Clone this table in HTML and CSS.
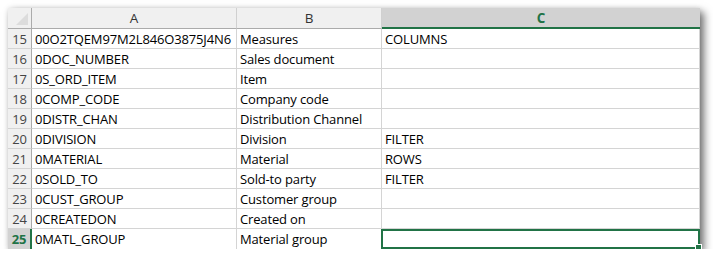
FILE: index.html
```html
<!DOCTYPE html>
<html>
<head>
<meta charset="utf-8">
<link rel="stylesheet" href="styles.css">
</head>
<body>
<div class="sheet">
  <div class="corner"><span class="tri"></span></div>
  <div class="colhead">A</div>
  <div class="colhead">B</div>
  <div class="colhead sel">C</div>

  <div class="rowhead">15</div><div class="cell">00O2TQEM97M2L846O3875J4N6</div><div class="cell">Measures</div><div class="cell">COLUMNS</div>
  <div class="rowhead">16</div><div class="cell">0DOC_NUMBER</div><div class="cell">Sales document</div><div class="cell"></div>
  <div class="rowhead">17</div><div class="cell">0S_ORD_ITEM</div><div class="cell">Item</div><div class="cell"></div>
  <div class="rowhead">18</div><div class="cell">0COMP_CODE</div><div class="cell">Company code</div><div class="cell"></div>
  <div class="rowhead">19</div><div class="cell">0DISTR_CHAN</div><div class="cell">Distribution Channel</div><div class="cell"></div>
  <div class="rowhead">20</div><div class="cell">0DIVISION</div><div class="cell">Division</div><div class="cell">FILTER</div>
  <div class="rowhead">21</div><div class="cell">0MATERIAL</div><div class="cell">Material</div><div class="cell">ROWS</div>
  <div class="rowhead">22</div><div class="cell">0SOLD_TO</div><div class="cell">Sold-to party</div><div class="cell">FILTER</div>
  <div class="rowhead">23</div><div class="cell">0CUST_GROUP</div><div class="cell">Customer group</div><div class="cell"></div>
  <div class="rowhead">24</div><div class="cell">0CREATEDON</div><div class="cell">Created on</div><div class="cell"></div>
  <div class="rowhead sel">25</div><div class="cell last">0MATL_GROUP</div><div class="cell last">Material group</div><div class="cell last active"><span class="handle"></span></div>
</div>
</body>
</html>
```

FILE: styles.css
```css
html, body {
  margin: 0;
  padding: 0;
  background: #ffffff;
}
body {
  padding: 8px 0 0 8px;
}
.sheet {
  display: grid;
  grid-template-columns: 24px 205px 145px 318px;
  grid-template-rows: 21px repeat(11, 20px);
  width: 692px;
  background: #fff;
  box-shadow: 4px 4px 8px rgba(0, 0, 0, 0.55), 0 0 5px rgba(0,0,0,0.1);
  font-family: "Open Sans", "Liberation Sans", sans-serif;
  font-size: 13px;
  letter-spacing: -0.15px;
  color: #000;
}
.corner {
  background: #f0f0f0;
  border-right: 1px solid #ababab;
  border-bottom: 1px solid #ababab;
  position: relative;
}
.tri {
  position: absolute;
  right: 3px;
  bottom: 3px;
  width: 0;
  height: 0;
  border-left: 12px solid transparent;
  border-bottom: 12px solid #dcdcdc;
}
.colhead {
  background: #f0f0f0;
  border-right: 1px solid #d0d0d0;
  border-bottom: 1px solid #ababab;
  display: flex;
  align-items: center;
  justify-content: center;
  color: #333;
  font-size: 13.5px;
}
.colhead.sel {
  background: #d2d2d2;
  border-bottom: 2px solid #217346;
  border-right: none;
  color: #217346;
  font-weight: bold;
}
.rowhead {
  background: #f0f0f0;
  border-right: 1px solid #ababab;
  border-bottom: 1px solid #d4d4d4;
  display: flex;
  align-items: center;
  justify-content: center;
  color: #444;
  font-size: 13px;
}
.rowhead.sel {
  background: #d2d2d2;
  color: #217346;
  font-weight: bold;
  border-right: 2px solid #217346;
  border-bottom: none;
}
.cell {
  border-right: 1px solid #d4d4d4;
  border-bottom: 1px solid #d4d4d4;
  display: flex;
  align-items: center;
  padding-left: 3px;
  white-space: nowrap;
  overflow: hidden;
}
.cell.last {
  border-bottom: none;
}
.cell.active {
  border: 2px solid #217346;
  margin-left: -1px;
  position: relative;
  overflow: visible;
}
.handle {
  position: absolute;
  right: -4px;
  bottom: -4px;
  width: 5px;
  height: 5px;
  background: #217346;
  border: 1px solid #fff;
}
```
